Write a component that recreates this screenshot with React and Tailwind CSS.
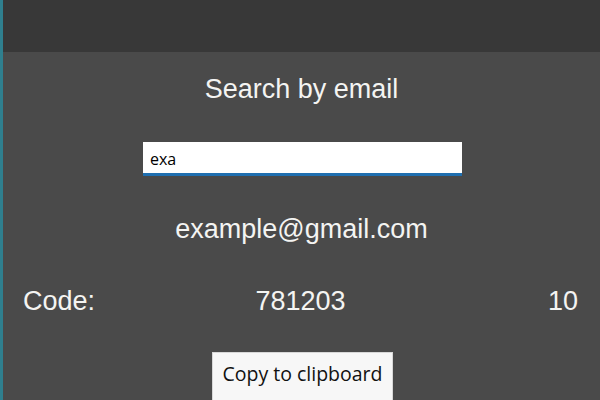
const App = () => {
  return (
    <div className="w-[600px] h-[400px] overflow-hidden flex bg-[#4a4a4a] font-['Liberation_Sans',Arial,sans-serif]">
      <div className="w-[3px] h-full shrink-0 bg-[#2f7f8e]" />
      <div className="flex-1 flex flex-col">
        <div className="h-[52px] shrink-0 bg-[#383838]" />
        <div className="flex flex-col shrink-0">
          <h1 className="mt-[21px] text-center text-[27px] leading-[32px] text-[#f4f4f2]">
            Search by email
          </h1>
          <input
            type="text"
            defaultValue="exa"
            className="mt-[37px] ml-[140px] w-[319px] h-[34px] bg-white border-b-[3px] border-[#1f6fb0] px-[7px] pt-[3px] text-[16px] text-black outline-none font-['Open_Sans',sans-serif]"
          />
          <div className="mt-[37px] text-center text-[27px] leading-[32px] text-[#f4f4f2]">
            example@gmail.com
          </div>
          <div className="mt-[40px] grid grid-cols-3 pl-[20px] pr-[22px] text-[27px] leading-[32px] text-[#f4f4f2]">
            <span className="text-left">Code:</span>
            <span className="text-center">781203</span>
            <span className="text-right">10</span>
          </div>
          <button className="mt-[35px] ml-[209px] w-[181px] h-[50px] bg-[#f7f7f7] border border-[#d8d8d8] pb-[6px] text-[19.5px] text-[#111] font-['Open_Sans',sans-serif]">
            Copy to clipboard
          </button>
        </div>
      </div>
    </div>
  );
};

export default App;
